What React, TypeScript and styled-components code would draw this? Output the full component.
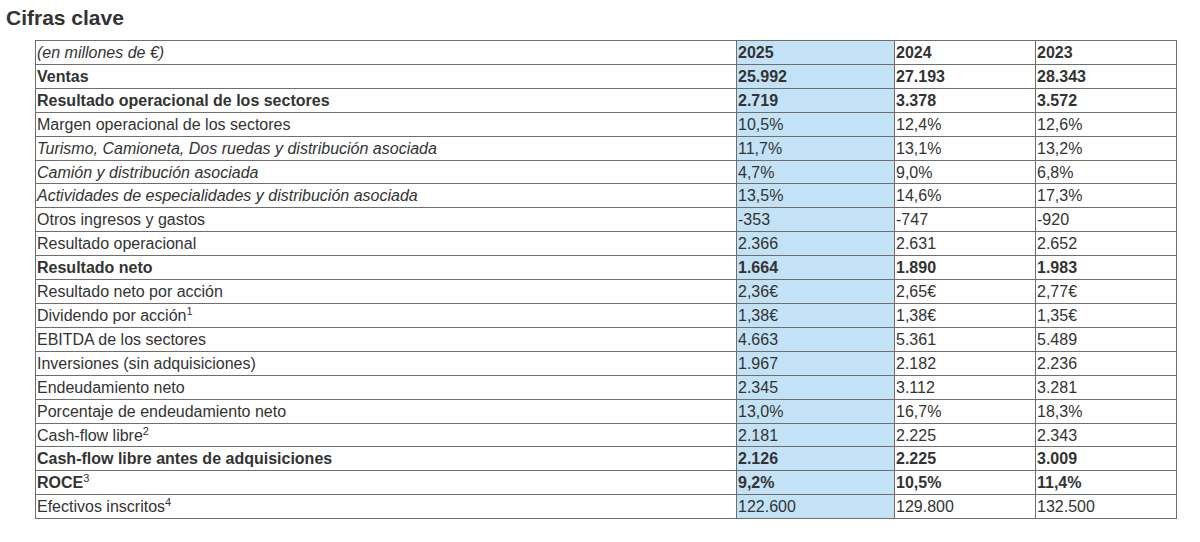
import styled, { createGlobalStyle } from 'styled-components'

const GlobalStyle = createGlobalStyle`
  body {
    margin: 0;
    background: #ffffff;
    font-family: "Liberation Sans", Arial, sans-serif;
    color: #333333;
  }
`

type Row = {
  label: string
  sup?: string
  values: [string, string, string]
  bold?: boolean
  italic?: boolean
}

const rows: Row[] = [
  { label: 'Ventas', values: ['25.992', '27.193', '28.343'], bold: true },
  { label: 'Resultado operacional de los sectores', values: ['2.719', '3.378', '3.572'], bold: true },
  { label: 'Margen operacional de los sectores', values: ['10,5%', '12,4%', '12,6%'] },
  { label: 'Turismo, Camioneta, Dos ruedas y distribución asociada', values: ['11,7%', '13,1%', '13,2%'], italic: true },
  { label: 'Camión y distribución asociada', values: ['4,7%', '9,0%', '6,8%'], italic: true },
  { label: 'Actividades de especialidades y distribución asociada', values: ['13,5%', '14,6%', '17,3%'], italic: true },
  { label: 'Otros ingresos y gastos', values: ['-353', '-747', '-920'] },
  { label: 'Resultado operacional', values: ['2.366', '2.631', '2.652'] },
  { label: 'Resultado neto', values: ['1.664', '1.890', '1.983'], bold: true },
  { label: 'Resultado neto por acción', values: ['2,36€', '2,65€', '2,77€'] },
  { label: 'Dividendo por acción', sup: '1', values: ['1,38€', '1,38€', '1,35€'] },
  { label: 'EBITDA de los sectores', values: ['4.663', '5.361', '5.489'] },
  { label: 'Inversiones (sin adquisiciones)', values: ['1.967', '2.182', '2.236'] },
  { label: 'Endeudamiento neto', values: ['2.345', '3.112', '3.281'] },
  { label: 'Porcentaje de endeudamiento neto', values: ['13,0%', '16,7%', '18,3%'] },
  { label: 'Cash-flow libre', sup: '2', values: ['2.181', '2.225', '2.343'] },
  { label: 'Cash-flow libre antes de adquisiciones', values: ['2.126', '2.225', '3.009'], bold: true },
  { label: 'ROCE', sup: '3', values: ['9,2%', '10,5%', '11,4%'], bold: true },
  { label: 'Efectivos inscritos', sup: '4', values: ['122.600', '129.800', '132.500'] },
]

export default function App() {
  return (
    <Page>
      <GlobalStyle />
      <Title>Cifras clave</Title>
      <Table>
        <colgroup>
          <col style={{ width: 701 }} />
          <col style={{ width: 158 }} />
          <col style={{ width: 141 }} />
          <col style={{ width: 141 }} />
        </colgroup>
        <tbody>
          <tr>
            <Cell $italic>(en millones de €)</Cell>
            <Cell $bold $current>2025</Cell>
            <Cell $bold>2024</Cell>
            <Cell $bold>2023</Cell>
          </tr>
          {rows.map((r) => (
            <tr key={r.label}>
              <Cell $bold={r.bold} $italic={r.italic}>
                {r.label}
                {r.sup && <Sup>{r.sup}</Sup>}
              </Cell>
              {r.values.map((v, i) => (
                <Cell key={i} $bold={r.bold} $current={i === 0}>
                  {v}
                </Cell>
              ))}
            </tr>
          ))}
        </tbody>
      </Table>
    </Page>
  )
}

const Page = styled.div`
  padding: 6px 0 0 6px;
`

const Title = styled.h2`
  margin: 0 0 10px 0;
  font-size: 21px;
  font-weight: 700;
  line-height: 24px;
  color: #333333;
`

const Table = styled.table`
  margin-left: 29px;
  border-collapse: collapse;
  table-layout: fixed;
  width: 1142px;
`

const Cell = styled.td<{ $bold?: boolean; $italic?: boolean; $current?: boolean }>`
  border: 1px solid #6e6e6e;
  padding: 1px 2px 0 1px;
  font-size: 16px;
  line-height: 21.9px;
  white-space: nowrap;
  vertical-align: middle;
  color: #333333;
  font-weight: ${({ $bold }) => ($bold ? 700 : 400)};
  font-style: ${({ $italic }) => ($italic ? 'italic' : 'normal')};
  background: ${({ $current }) => ($current ? '#c3e2f6' : 'transparent')};
`

const Sup = styled.sup`
  font-size: 11px;
  font-weight: 400;
  line-height: 0;
  vertical-align: 6px;
`
